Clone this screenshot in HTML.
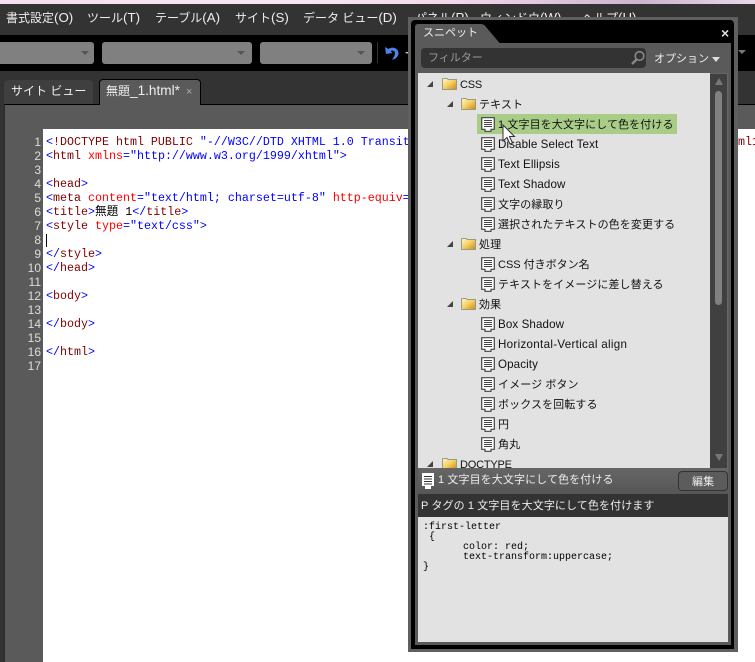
<!DOCTYPE html>
<html lang="ja"><head><meta charset="utf-8"><title>スニペット</title>
<style>
html,body{margin:0;padding:0;background:#fff}
#p{position:relative;width:755px;height:662px;overflow:hidden;background:#fff;font-family:"Liberation Sans","Noto Sans CJK JP",sans-serif}
#p div,#p svg{position:absolute}
.m{top:8px;font-size:12px;line-height:20px;color:#eee;white-space:nowrap}
.m em{font-style:normal;font-size:13.3px}
.c{top:42px;height:22px;background:#808080;border-radius:3px}
.ar{top:51px;width:0;height:0;border-left:4px solid transparent;border-right:4px solid transparent;border-top:4px solid #555}
#code{left:46px;top:135px;font:11.67px/14px "Liberation Mono","Noto Sans CJK JP",monospace;white-space:pre;color:#00f}
#nums{left:4px;top:135px;width:37px;text-align:right;font:12px/14px "Liberation Sans",sans-serif;color:#ddd}
b{font-weight:normal;color:#800000}i{font-style:normal;color:#f00}u{text-decoration:none;color:#000}
.t{margin-top:1px;font-size:11px;line-height:20px;color:#111;white-space:nowrap;letter-spacing:.1px}
.l{font-size:11.6px}
.cd{font:10px/10px 'Liberation Mono',monospace;color:#000;white-space:pre}
</style></head><body><div id="p">
<svg width="0" height="0" style="left:0;top:0"><defs>
<linearGradient id="fg" x1="0" y1="0" x2="1" y2="1"><stop offset="0" stop-color="#fff8c8"/><stop offset=".5" stop-color="#f5cf60"/><stop offset="1" stop-color="#c98a10"/></linearGradient>
<symbol id="fo" viewBox="0 0 15 12"><path d="M.5 2.500V1.200Q.5.5 1.200.5H5Q5.700.5 6 1.500H14.500V11.500H.5Z" fill="url(#fg)" stroke="#9a9a88"/></symbol>
<symbol id="doc" viewBox="0 0 14 15"><path d="M.7.7H13.300V12.300H10V14.300H4V12.300H.7Z" fill="#fff" stroke="#444" stroke-width="1.200"/><path d="M3 3.500H11M3 5.500H11M3 7.500H11M3 9.500H11" stroke="#444"/></symbol>
<symbol id="tri" viewBox="0 0 6 6"><path d="M0 6L6 0V6Z" fill="#444"/></symbol>
</defs></svg>

<div style="left:0;top:0;width:755px;height:4px;background:linear-gradient(90deg,#f5dff0,#f7e6f2 40%,#f2d8ea 60%,#cdb5cf 85%,#e8d8e8)"></div>
<div style="left:0;top:4px;width:755px;height:31px;background:#333"></div>
<div class="m" style="left:6px">書式設定<em>(O)</em></div>
<div class="m" style="left:87px">ツール<em>(T)</em></div>
<div class="m" style="left:155px">テーブル<em>(A)</em></div>
<div class="m" style="left:235px">サイト<em>(S)</em></div>
<div class="m" style="left:303px">データ ビュー<em>(D)</em></div>
<div class="m" style="left:415px">パネル<em>(P)</em></div>
<div class="m" style="left:480px">ウィンドウ<em>(W)</em></div>
<div class="m" style="left:582px">ヘルプ<em>(H)</em></div>

<div style="left:0;top:35px;width:755px;height:36px;background:#000"></div>
<div class="c" style="left:-6px;width:100px"></div><div class="ar" style="left:81px"></div>
<div class="c" style="left:102px;width:150px"></div><div class="ar" style="left:237px"></div>
<div class="c" style="left:260px;width:112px"></div><div class="ar" style="left:357px"></div>
<div style="left:377px;top:42px;width:1px;height:21px;background:#333"></div>
<svg style="left:385px;top:46px" width="14" height="14" viewBox="0 0 14 14"><path d="M0 1L1 8L7.500 7L5.500 5C7.500 4 10 5 10 7C10 9 9 11 7 13.500C11 13.500 13.500 10 13.500 7C13.500 2 7 0 3.500 3Z" fill="#4f82e6"/></svg>
<div style="left:405px;top:52px;width:0;height:0;border-left:2px solid transparent;border-right:2px solid transparent;border-top:2px solid #bbb"></div>
<div style="left:738px;top:50px;width:0;height:0;border-left:4px solid transparent;border-right:4px solid transparent;border-top:4px solid #777"></div>

<div style="left:0;top:71px;width:755px;height:591px;background:#333"></div>
<div style="left:4px;top:80px;width:89px;height:24px;background:#3f3f3f;border-radius:4px 4px 0 0"></div>
<div class="m" style="left:11px;top:81px;font-size:12px">サイト ビュー</div>
<div style="left:4px;top:104px;width:751px;height:558px;background:#5a5a5a;border-top:1px solid #000;border-left:1px solid #2a2a2a;box-sizing:border-box"></div>
<div style="left:99px;top:79px;width:102px;height:26px;box-sizing:border-box;background:#5a5a5a;border:1px solid #000;border-bottom:0;border-radius:4px 4px 0 0"></div>
<div class="m" style="left:106px;top:81px;font-size:12px">無題<span style="font-size:13.6px">_1.html*</span></div>
<div class="m" style="left:186px;top:82px;font-size:11px;color:#aaa">×</div>

<div style="left:43px;top:129px;width:712px;height:533px;background:#fff"></div>
<div id="nums">1<br>2<br>3<br>4<br>5<br>6<br>7<br>8<br>9<br>10<br>11<br>12<br>13<br>14<br>15<br>16<br>17</div>
<div id="code">&lt;<b>!DOCTYPE html PUBLIC</b> "-//W3C//DTD XHTML 1.0 Transitional//EN" "http://www.w3.org/TR/xhtml1/DTD/xhtml1-transitional.dtd"&gt;
&lt;<b>html</b> <i>xmlns</i>="http://www.w3.org/1999/xhtml"&gt;

&lt;<b>head</b>&gt;
&lt;<b>meta</b> <i>content</i>="text/html; charset=utf-8" <i>http-equiv</i>="Content-Type" /&gt;
&lt;<b>title</b>&gt;<u>無題 1</u>&lt;/<b>title</b>&gt;
&lt;<b>style</b> <i>type</i>="text/css"&gt;

&lt;/<b>style</b>&gt;
&lt;/<b>head</b>&gt;

&lt;<b>body</b>&gt;

&lt;/<b>body</b>&gt;

&lt;/<b>html</b>&gt;</div>
<div style="left:46px;top:234px;width:1px;height:13px;background:#000"></div>
<div style="left:738px;top:135px;width:17px;height:14px;background:#fff;font:11.67px/14px 'Liberation Mono',monospace;color:#800000">ml1</div>

<!-- panel -->
<div style="left:408px;top:17px;width:330px;height:635px;background:#5f5f5f"></div>
<div style="left:411px;top:20px;width:323px;height:628.500px;background:#000;border-radius:4px 4px 0 0"></div>
<div style="left:415px;top:43px;width:316px;height:602px;background:#5a5a5a"></div>
<svg style="left:415px;top:24px" width="90" height="20" viewBox="0 0 90 20"><path d="M0 20V3Q0 0 3 0H66Q69 0 71 3L85 19.500V20Z" fill="#5a5a5a"/></svg>
<div class="m" style="left:423px;top:23px;font-size:11px;color:#eee">スニペット</div>
<div class="m" style="left:721px;top:23px;font-size:14px;font-weight:bold;color:#ddd">×</div>
<div style="left:421px;top:48px;width:225px;height:20px;background:#333;border-radius:4px"></div>
<div class="m" style="left:428px;top:48px;font-size:11px;color:#999">フィルター</div>
<svg style="left:630px;top:50px" width="16" height="16" viewBox="0 0 16 16"><circle cx="9.500" cy="6" r="4.300" fill="none" stroke="#888" stroke-width="1.600"/><path d="M6.500 9.500L2 14" stroke="#888" stroke-width="2.400"/></svg>
<div class="m" style="left:654px;top:49px;font-size:11px;color:#eee">オプション</div>
<div style="left:712px;top:57px;width:0;height:0;border-left:4px solid transparent;border-right:4px solid transparent;border-top:5px solid #ddd"></div>

<div style="left:418px;top:73px;width:292px;height:395px;background:#e2e2e2"></div>
<div style="left:710px;top:73px;width:18px;height:395px;background:#404040;border-top:1px solid #666;border-right:1px solid #666;box-sizing:border-box"></div>
<div style="left:715px;top:91px;width:7px;height:214px;background:#808080;border-radius:4px"></div>
<div style="left:715px;top:78px;width:0;height:0;border-left:4px solid transparent;border-right:4px solid transparent;border-bottom:7px solid #777"></div>
<div style="left:715px;top:454px;width:0;height:0;border-left:4px solid transparent;border-right:4px solid transparent;border-top:7px solid #777"></div>

<div style="left:477px;top:114px;width:200px;height:20px;background:#a9cd87"></div>

<svg style="left:427px;top:81px" width="6" height="6"><use href="#tri"/></svg>
<svg style="left:442px;top:78px" width="15" height="12"><use href="#fo"/></svg><div class="t" style="left:460px;top:74px;letter-spacing:-.2px">CSS</div>
<svg style="left:447px;top:101px" width="6" height="6"><use href="#tri"/></svg>
<svg style="left:461px;top:98px" width="15" height="12"><use href="#fo"/></svg><div class="t" style="left:479px;top:94px">テキスト</div>
<svg style="left:481px;top:117px" width="14" height="15"><use href="#doc"/></svg><div class="t" style="left:498px;top:114px">1 文字目を大文字にして色を付ける</div>
<svg style="left:481px;top:137px" width="14" height="15"><use href="#doc"/></svg><div class="t l" style="left:498px;top:134px">Disable Select Text</div>
<svg style="left:481px;top:157px" width="14" height="15"><use href="#doc"/></svg><div class="t l" style="left:498px;top:154px">Text Ellipsis</div>
<svg style="left:481px;top:177px" width="14" height="15"><use href="#doc"/></svg><div class="t l" style="left:498px;top:174px">Text Shadow</div>
<svg style="left:481px;top:197px" width="14" height="15"><use href="#doc"/></svg><div class="t" style="left:498px;top:194px">文字の縁取り</div>
<svg style="left:481px;top:217px" width="14" height="15"><use href="#doc"/></svg><div class="t" style="left:498px;top:214px">選択されたテキストの色を変更する</div>
<svg style="left:447px;top:241px" width="6" height="6"><use href="#tri"/></svg>
<svg style="left:461px;top:238px" width="15" height="12"><use href="#fo"/></svg><div class="t" style="left:479px;top:234px">処理</div>
<svg style="left:481px;top:257px" width="14" height="15"><use href="#doc"/></svg><div class="t" style="left:498px;top:254px;letter-spacing:0">CSS 付きボタン名</div>
<svg style="left:481px;top:277px" width="14" height="15"><use href="#doc"/></svg><div class="t" style="left:498px;top:274px">テキストをイメージに差し替える</div>
<svg style="left:447px;top:301px" width="6" height="6"><use href="#tri"/></svg>
<svg style="left:461px;top:298px" width="15" height="12"><use href="#fo"/></svg><div class="t" style="left:479px;top:294px">効果</div>
<svg style="left:481px;top:317px" width="14" height="15"><use href="#doc"/></svg><div class="t l" style="left:498px;top:314px">Box Shadow</div>
<svg style="left:481px;top:337px" width="14" height="15"><use href="#doc"/></svg><div class="t l" style="left:498px;top:334px;letter-spacing:.3px">Horizontal-Vertical align</div>
<svg style="left:481px;top:357px" width="14" height="15"><use href="#doc"/></svg><div class="t l" style="left:498px;top:354px">Opacity</div>
<svg style="left:481px;top:377px" width="14" height="15"><use href="#doc"/></svg><div class="t" style="left:498px;top:374px">イメージ ボタン</div>
<svg style="left:481px;top:397px" width="14" height="15"><use href="#doc"/></svg><div class="t" style="left:498px;top:394px">ボックスを回転する</div>
<svg style="left:481px;top:417px" width="14" height="15"><use href="#doc"/></svg><div class="t" style="left:498px;top:414px">円</div>
<svg style="left:481px;top:437px" width="14" height="15"><use href="#doc"/></svg><div class="t" style="left:498px;top:434px">角丸</div>
<svg style="left:427px;top:461px" width="6" height="6"><use href="#tri"/></svg>
<svg style="left:442px;top:458px" width="15" height="12"><use href="#fo"/></svg><div class="t" style="left:460px;top:454px;letter-spacing:-.2px">DOCTYPE</div>

<div style="left:418px;top:468px;width:310px;height:26px;background:linear-gradient(#666,#565656)"></div>
<svg style="left:421px;top:473px" width="14" height="16" viewBox="0 0 14 16"><path d="M1 0H13V13H10V16H4V13H1Z" fill="#fff"/><path d="M3 3H11V4H3ZM3 5.500H11V6.500H3ZM3 8H11V9H3ZM3 10.500H11V11.500H3Z" fill="#333"/></svg>
<div class="t" style="left:438px;top:469px;color:#eee">1 文字目を大文字にして色を付ける</div>
<div style="left:678px;top:471px;width:50px;height:20px;box-sizing:border-box;border:1px solid #333;border-radius:4px;background:#5c5c5c"></div>
<div class="t" style="left:692px;top:471px;color:#eee">編集</div>
<div style="left:418px;top:494px;width:310px;height:23px;background:#333"></div>
<div class="t" style="left:421px;top:495px;color:#eee">P タグの 1 文字目を大文字にして色を付けます</div>
<div style="left:418px;top:517px;width:310px;height:125px;background:#e2e2e2"></div>
<div class="cd" style="left:423px;top:523px">:first-letter</div>
<div class="cd" style="left:423px;top:533px"> {</div>
<div class="cd" style="left:463px;top:543px">color: red;</div>
<div class="cd" style="left:463px;top:553px">text-transform:uppercase;</div>
<div class="cd" style="left:423px;top:563px">}</div>

<svg style="left:502px;top:124px" width="14" height="22" viewBox="0 0 14 22"><path d="M1 1V17L5 13.500L8 20L10.500 19L7.500 12.500H12.500Z" fill="#fff" stroke="#333"/></svg>
</div></body></html>
